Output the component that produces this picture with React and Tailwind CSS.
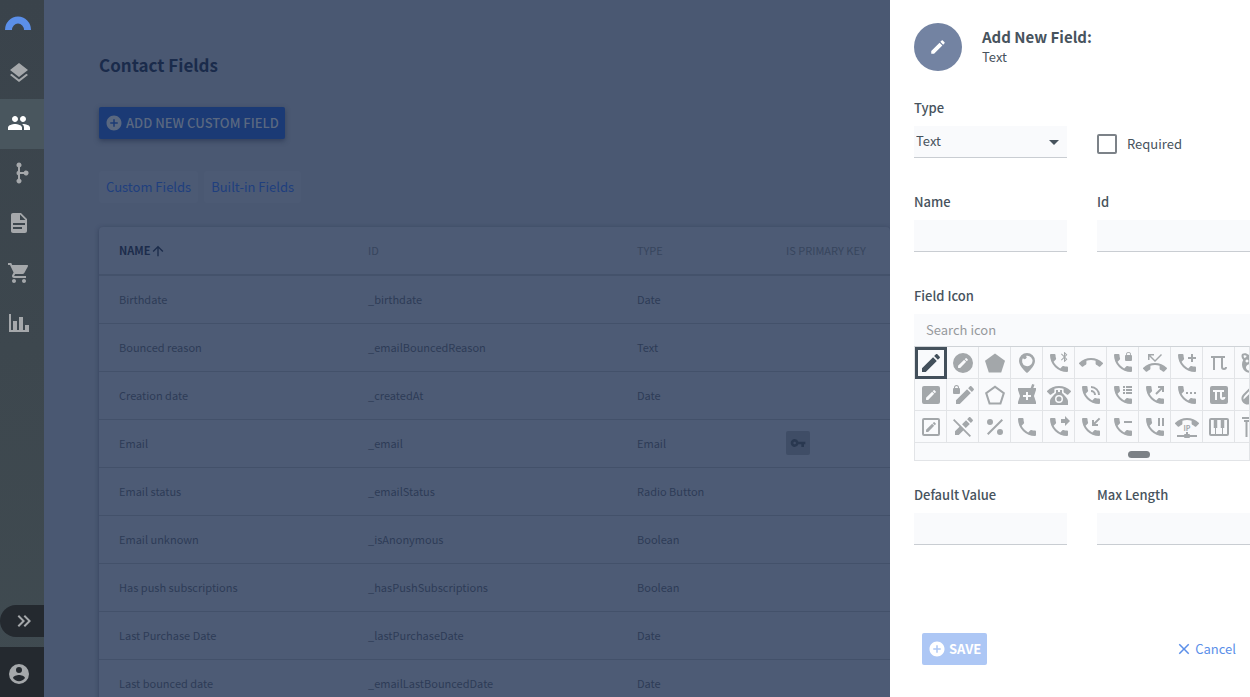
import React, { useState } from "react";
import {
  MdLayers,
  MdPeople,
  MdShoppingCart,
  MdAddCircle,
  MdArrowUpward,
  MdClose,
  MdVpnKey,
} from "react-icons/md";

const PHONE =
  "M6.62,10.79C8.06,13.62 10.38,15.94 13.21,17.38L15.41,15.18C15.69,14.9 16.08,14.82 16.43,14.93C17.55,15.3 18.75,15.5 20,15.5A1,1 0 0,1 21,16.5V20A1,1 0 0,1 20,21A17,17 0 0,1 3,4A1,1 0 0,1 4,3H7.5A1,1 0 0,1 8.5,4C8.5,5.25 8.7,6.45 9.07,7.57C9.18,7.92 9.1,8.31 8.82,8.59L6.62,10.79Z";
const PENCIL =
  "M20.71,7.04C21.1,6.65 21.1,6 20.71,5.63L18.37,3.29C18,2.9 17.35,2.9 16.96,3.29L15.12,5.12L18.87,8.87M3,17.25V21H6.75L17.81,9.93L14.06,6.18L3,17.25Z";
const SMALL_PENCIL =
  "M15.1,7.07C15.24,7.07 15.38,7.12 15.5,7.23L16.77,8.5C17,8.72 17,9.07 16.77,9.28L15.77,10.28L13.72,8.23L14.72,7.23C14.82,7.12 14.96,7.07 15.1,7.07M13.13,8.81L15.19,10.87L9.13,16.93H7.07V14.87L13.13,8.81Z";
const BOX = "M5,3H19A2,2 0 0,1 21,5V19A2,2 0 0,1 19,21H5A2,2 0 0,1 3,19V5A2,2 0 0,1 5,3Z";
const HANGUP =
  "M12,9C10.4,9 8.85,9.25 7.4,9.72V12.82C7.4,13.22 7.17,13.56 6.84,13.72C5.86,14.21 4.97,14.84 4.17,15.57C4,15.75 3.75,15.86 3.5,15.86C3.2,15.86 2.95,15.74 2.77,15.56L0.29,13.08C0.11,12.9 0,12.65 0,12.38C0,12.1 0.11,11.85 0.29,11.67C3.34,8.77 7.46,7 12,7C16.54,7 20.66,8.77 23.71,11.67C23.89,11.85 24,12.1 24,12.38C24,12.65 23.89,12.9 23.71,13.08L21.23,15.56C21.05,15.74 20.8,15.86 20.5,15.86C20.25,15.86 20,15.75 19.82,15.57C19.03,14.84 18.14,14.21 17.16,13.72C16.83,13.56 16.6,13.22 16.6,12.82V9.72C15.15,9.25 13.6,9 12,9Z";

// listed column by column, three to a column
const fieldIcons = [
  { key: "pencil", d: PENCIL },
  { key: "pencil-box", d: BOX + SMALL_PENCIL },
  { key: "pencil-box-outline", d: BOX + "M5,5V19H19V5H5Z" + SMALL_PENCIL },
  { key: "pencil-circle", d: "M12,2A10,10 0 1,0 22,12A10,10 0 0,0 12,2Z" + SMALL_PENCIL },
  {
    key: "pencil-lock",
    d: "M5.5,2A2.5,2.5 0 0,0 3,4.5V5A1,1 0 0,0 2,6V10A1,1 0 0,0 3,11H8A1,1 0 0,0 9,10V6A1,1 0 0,0 8,5V4.5A2.5,2.5 0 0,0 5.5,2M5.5,3A1.5,1.5 0 0,1 7,4.5V5H4V4.5A1.5,1.5 0 0,1 5.5,3M19.66,3C19.4,3 19.16,3.09 18.97,3.28L17.13,5.13L20.88,8.88L22.72,7.03C23.11,6.64 23.11,6 22.72,5.63L20.38,3.28C20.18,3.09 19.91,3 19.66,3M16.06,6.19L5,17.25V21H8.75L19.81,9.94L16.06,6.19Z",
  },
  {
    key: "pencil-off",
    d: "M18.66,2C18.4,2 18.16,2.09 17.97,2.28L16.13,4.13L19.88,7.88L21.72,6.03C22.11,5.64 22.11,5 21.72,4.63L19.38,2.28C19.18,2.09 18.91,2 18.66,2M3.28,4L2,5.28L8.5,11.75L4,16.25V20H7.75L12.25,15.5L18.72,22L20,20.72L13.5,14.25L9.75,10.5L3.28,4M15.06,5.19L11.03,9.22L14.78,12.97L18.81,8.94L15.06,5.19Z",
  },
  { key: "pentagon", d: "M12,2.5L2,9.8L5.8,21.5H18.2L22,9.8L12,2.5Z" },
  { key: "pentagon-outline", d: "M12,2.5L2,9.8L5.8,21.5H18.2L22,9.8L12,2.5ZM12,5L19.6,10.5L16.7,19.5H7.3L4.4,10.5L12,5Z" },
  {
    key: "percent",
    d: "M7,4A3,3 0 0,1 10,7A3,3 0 0,1 7,10A3,3 0 0,1 4,7A3,3 0 0,1 7,4M17,14A3,3 0 0,1 20,17A3,3 0 0,1 17,20A3,3 0 0,1 14,17A3,3 0 0,1 17,14M20,5.41L5.41,20L4,18.59L18.59,4L20,5.41Z",
  },
  {
    key: "periscope",
    d: "M12,2A8,8 0 0,0 4,10C4,15.5 12,22 12,22S20,15.5 20,10A8,8 0 0,0 12,2ZM12,4.8C11.7,4.8 11.4,4.8 11.1,4.9A1.9,1.9 0 1,1 8,7A5.2,5.2 0 1,0 12,4.8Z",
  },
  {
    key: "pharmacy",
    d: "M21,5H18.35L19.5,1.85L17.15,1L15.69,5H3V7L5,13L3,19V21H21V19L19,13L21,7V5M16,14H13V17H11V14H8V12H11V9H13V12H16V14Z",
  },
  { key: "phone", d: PHONE },
  {
    key: "phone-bluetooth",
    d: PHONE + "M18,7.21L18.94,8.14L18,9.08M18,2.91L18.94,3.85L18,4.79M14.71,9.5L17,7.21V11H17.5L20.35,8.14L18.21,6L20.35,3.85L17.5,1H17V4.79L14.71,2.5L14,3.21L16.79,6L14,8.79L14.71,9.5Z",
  },
  {
    key: "phone-classic",
    d: "M12,3C7.46,3 3.34,4.78 0.29,7.67C0.11,7.85 0,8.1 0,8.38C0,8.66 0.11,8.91 0.29,9.09L2.77,11.57C2.95,11.75 3.2,11.86 3.5,11.86C3.75,11.86 4,11.75 4.18,11.58C4.97,10.84 5.87,10.22 6.84,9.73C7.17,9.57 7.4,9.23 7.4,8.83V5.73C8.85,5.25 10.39,5 12,5C13.59,5 15.14,5.25 16.59,5.72V8.82C16.59,9.21 16.82,9.56 17.15,9.72C18.13,10.21 19,10.84 19.82,11.57C20,11.75 20.25,11.85 20.5,11.85C20.8,11.85 21.05,11.74 21.23,11.56L23.71,9.08C23.89,8.9 24,8.65 24,8.37C24,8.09 23.88,7.85 23.7,7.67C20.65,4.78 16.53,3 12,3M9,7V10C9,10 3,15 3,18V22H21V18C21,15 15,10 15,10V7H13V9H11V7H9M12,12A4,4 0 0,1 16,16A4,4 0 0,1 12,20A4,4 0 0,1 8,16A4,4 0 0,1 12,12M12,13.5A2.5,2.5 0 0,0 9.5,16A2.5,2.5 0 0,0 12,18.5A2.5,2.5 0 0,0 14.5,16A2.5,2.5 0 0,0 12,13.5Z",
  },
  { key: "phone-forward", d: PHONE + "M18,11L23,6L18,1V4H14V8H18V11Z" },
  { key: "phone-hangup", d: HANGUP },
  {
    key: "phone-in-talk",
    d: PHONE + "M19,12H21A9,9 0 0,0 12,3V5C15.86,5 19,8.13 19,12M15,12H17A5,5 0 0,0 12,7V9A3,3 0 0,1 15,12Z",
  },
  { key: "phone-incoming", d: PHONE + "M19,11V9H16.41L21.3,4.1L19.9,2.7L15,7.59V5H13V11H19Z" },
  {
    key: "phone-lock",
    d: PHONE + "M20,4V3.5A2.5,2.5 0 0,0 17.5,1A2.5,2.5 0 0,0 15,3.5V4A1,1 0 0,0 14,5V9A1,1 0 0,0 15,10H20A1,1 0 0,0 21,9V5A1,1 0 0,0 20,4M19.2,4H15.8V3.5A1.7,1.7 0 0,1 17.5,1.8A1.7,1.7 0 0,1 19.2,3.5V4Z",
  },
  { key: "phone-log", d: PHONE + "M12,3H14V5H12ZM15,3H21V5H15ZM12,6H14V8H12ZM15,6H21V8H15ZM12,9H14V11H12ZM15,9H21V11H15Z" },
  { key: "phone-minus", d: PHONE + "M13,6V8H21V6Z" },
  {
    key: "phone-missed",
    d: "M6.5,5.5L12,11L19,4L18,3L12,9L7.5,4.5H11V3H5V9H6.5V5.5M23.71,16.67C20.66,13.78 16.54,12 12,12C7.46,12 3.34,13.78 0.29,16.67C0.11,16.85 0,17.1 0,17.38C0,17.65 0.11,17.9 0.29,18.08L2.77,20.56C2.95,20.74 3.2,20.86 3.5,20.86C3.75,20.86 4,20.75 4.18,20.58C4.97,19.84 5.87,19.22 6.84,18.73C7.17,18.57 7.4,18.23 7.4,17.83V14.73C8.85,14.25 10.39,14 12,14C13.6,14 15.15,14.25 16.6,14.72V17.82C16.6,18.22 16.83,18.56 17.16,18.72C18.13,19.21 19.03,19.83 19.82,20.57C20,20.75 20.25,20.85 20.5,20.85C20.8,20.85 21.05,20.74 21.23,20.56L23.71,18.08C23.89,17.9 24,17.65 24,17.37C24,17.09 23.88,16.85 23.71,16.67Z",
  },
  { key: "phone-outgoing", d: PHONE + "M15,3V5H17.59L12.3,10.3L13.7,11.7L19,6.41V9H21V3H15Z" },
  { key: "phone-pause", d: PHONE + "M19,11H21V3H19ZM15,11H17V3H15Z" },
  { key: "phone-plus", d: PHONE + "M18,3V6H21V8H18V11H16V8H13V6H16V3H18Z" },
  { key: "phone-settings", d: PHONE + "M19,11H21V9H19ZM15,9V11H17V9ZM13,9H11V11H13Z" },
  { key: "phone-voip", d: "M13,17V19H14A1,1 0 0,1 15,20H22V22H15A1,1 0 0,1 14,23H10A1,1 0 0,1 9,22H2V20H9A1,1 0 0,1 10,19H11V17H13Z" },
  { key: "pi", d: "M4,5V7H6V19H8V7H14V16A3,3 0 0,0 17,19A3,3 0 0,0 20,16H18A1,1 0 0,1 17,17A1,1 0 0,1 16,16V7H18V5Z" },
  { key: "pi-box", d: BOX + "M6,7V9H8V17H10V9H13V14A3,3 0 0,0 16,17A3,3 0 0,0 18.5,14H16.5A1,1 0 0,1 15,14V9H17V7H6Z" },
  {
    key: "piano",
    d: "M4,3H20A2,2 0 0,1 22,5V19A2,2 0 0,1 20,21H4A2,2 0 0,1 2,19V5A2,2 0 0,1 4,3M4,5V19H8V13H6.75V5H4M9,19H15V13H13.75V5H10.25V13H9V19M16,19H20V5H17.25V13H16V19Z",
  },
  {
    key: "pig",
    d: "M3,3C5,1.6 8,2 9.5,3.8H14.5C16,2 19,1.6 21,3C22,5 21.4,7.5 19.8,9C21,11 21.4,13.5 20.5,16.5C19,20.5 15.5,22 12,22S5,20.5 3.5,16.5C2.6,13.5 3,11 4.2,9C2.6,7.5 2,5 3,3ZM4.6,4.4C4.5,5.6 5,6.6 5.8,7.2L7.8,4.9C6.8,4.2 5.6,4 4.6,4.4ZM8,8.5A1.5,1.5 0 1,0 8.01,8.5ZM12,13C9,13 7,14.5 7,16.5S9,20 12,20S17,18.5 17,16.5S15,13 12,13Z",
  },
  {
    key: "pill",
    d: "M4.22,11.29L11.29,4.22C13.64,1.88 17.43,1.88 19.78,4.22C22.12,6.56 22.12,10.36 19.78,12.71L12.71,19.78C10.36,22.12 6.56,22.12 4.22,19.78C1.88,17.43 1.88,13.64 4.22,11.29M5.64,12.71C4.59,13.75 4.24,15.24 4.6,16.57L10.59,10.59L14.83,14.83L18.36,11.29C19.93,9.73 19.93,7.2 18.36,5.64C16.8,4.07 14.27,4.07 12.71,5.64L5.64,12.71Z",
  },
  { key: "pillar", d: "M3,2H21V4H3ZM5,5H19V7H17.5V22H15.5V7H13V22H11V7H8.5V22H6.5V7H5Z" },
];

const sidebarPaths = {
  branch:
    "M12,1.5A2.5,2.5 0 0,1 13,6.3V11H16.8A2.5,2.5 0 1,1 16.8,13H13V17.7A2.5,2.5 0 1,1 11,17.7V14.3A2.5,2.5 0 0,1 11,9.7V6.3A2.5,2.5 0 0,1 12,1.5Z",
  file: "M13,9H18.5L13,3.5V9M6,2H14L20,8V20A2,2 0 0,1 18,22H6C4.89,22 4,21.1 4,20V4C4,2.89 4.89,2 6,2M15,18V16H6V18H15M18,14V12H6V14H18Z",
  chart: "M22,21H2V3H4V19H6V10H10V19H12V6H16V19H18V14H22V21Z",
  expand: "M5.59,7.41L7,6L13,12L7,18L5.59,16.59L10.17,12L5.59,7.41M11.59,7.41L13,6L19,12L13,18L11.59,16.59L16.17,12L11.59,7.41Z",
  account:
    "M12,19.2C9.5,19.2 7.29,17.92 6,16C6.03,14 10,12.9 12,12.9C14,12.9 17.97,14 18,16C16.71,17.92 14.5,19.2 12,19.2M12,5A3,3 0 0,1 15,8A3,3 0 0,1 12,11A3,3 0 0,1 9,8A3,3 0 0,1 12,5M12,2A10,10 0 1,0 22,12A10,10 0 0,0 12,2Z",
};

const rows = [
  { name: "Birthdate", id: "_birthdate", type: "Date" },
  { name: "Bounced reason", id: "_emailBouncedReason", type: "Text" },
  { name: "Creation date", id: "_createdAt", type: "Date" },
  { name: "Email", id: "_email", type: "Email", primary: true },
  { name: "Email status", id: "_emailStatus", type: "Radio Button" },
  { name: "Email unknown", id: "_isAnonymous", type: "Boolean" },
  { name: "Has push subscriptions", id: "_hasPushSubscriptions", type: "Boolean" },
  { name: "Last Purchase Date", id: "_lastPurchaseDate", type: "Date" },
  { name: "Last bounced date", id: "_emailLastBouncedDate", type: "Date" },
];

function Icon({ d, className = "h-6 w-6", children }) {
  return (
    <svg viewBox="0 0 24 24" fill="currentColor" fillRule="evenodd" className={`shrink-0 ${className}`}>
      <path d={d} />
      {children}
    </svg>
  );
}

const navItems = [
  { key: "content", icon: <MdLayers className="h-6 w-6" /> },
  { key: "contacts", icon: <MdPeople className="h-6 w-6" />, active: true },
  { key: "automation", icon: <Icon d={sidebarPaths.branch} /> },
  { key: "pages", icon: <Icon d={sidebarPaths.file} /> },
  { key: "store", icon: <MdShoppingCart className="h-6 w-6" /> },
  { key: "reports", icon: <Icon d={sidebarPaths.chart} /> },
];

function Sidebar() {
  return (
    <aside className="flex w-11 shrink-0 flex-col bg-linear-to-b from-[#3a434b] to-[#404b51] text-[#a5a8ab]">
      <a href="#home" aria-label="Home" className="flex h-[49px] shrink-0 items-center pb-1 pl-[5px] text-[#5b8fe9]">
        <svg viewBox="0 0 26 14" fill="currentColor" className="h-[14px] w-[26px]">
          <path d="M0 14A13 13.5 0 0 1 26 14H19A6 6.5 0 0 0 7 14Z" />
        </svg>
      </a>
      <nav className="flex-1">
        {navItems.map((item) => (
          <a
            key={item.key}
            href={`#${item.key}`}
            aria-label={item.key}
            className={`flex h-[50px] items-center pb-0.5 pl-[7px] ${item.active ? "bg-[#49565e] text-white" : ""}`}
          >
            {item.icon}
          </a>
        ))}
      </nav>
      <button aria-label="Expand" className="mb-[10px] flex h-8 items-center rounded-l-full bg-[#24292f] pl-3">
        <Icon d={sidebarPaths.expand} />
      </button>
      <button aria-label="Account" className="flex h-[50px] items-center bg-[#24292f] pt-1 pl-[7px]">
        <Icon d={sidebarPaths.account} />
      </button>
    </aside>
  );
}

function FieldsTable() {
  return (
    <table className="w-full table-fixed rounded bg-[#4d5b75] text-left text-[11px] shadow-[0_1px_4px_rgba(30,42,70,0.5)]">
      <colgroup>
        <col className="w-[269px]" />
        <col className="w-[269px]" />
        <col className="w-[149px]" />
        <col />
      </colgroup>
      <thead>
        <tr className="h-12 border-b-2 border-[#44526b] text-[#37455d]">
          <th className="pl-5 font-bold text-[#1c2c4b]">
            <button className="flex items-center">
              NAME <MdArrowUpward className="h-4 w-4" />
            </button>
          </th>
          <th className="font-normal">ID</th>
          <th className="font-normal">TYPE</th>
          <th className="font-normal">IS PRIMARY KEY</th>
        </tr>
      </thead>
      <tbody className="text-[#2d3c57]">
        {rows.map((row) => (
          <tr key={row.id} className="h-12 border-b border-[#43516a]">
            <td className="pl-5">{row.name}</td>
            <td>{row.id}</td>
            <td>{row.type}</td>
            <td>
              {row.primary && (
                <span className="flex h-6 w-6 items-center justify-center rounded-xs bg-[#3f4d66] text-[#293850]">
                  <MdVpnKey className="h-4 w-4" />
                </span>
              )}
            </td>
          </tr>
        ))}
      </tbody>
    </table>
  );
}

function ContactFields() {
  return (
    <main className="min-w-0 flex-1 overflow-hidden bg-[#4a5872] pt-[51px] pl-[55px]">
      <h1 className="text-[17px] leading-7 font-bold text-[#1a2b4b]">Contact Fields</h1>
      <button className="mt-7 flex h-8 items-center gap-[3px] rounded-xs bg-[#1b3a75] px-1.5 text-[13px] font-medium text-[#5a6880] shadow-[0_2px_5px_rgba(25,38,66,0.5)]">
        <MdAddCircle className="h-[18px] w-[18px]" />
        ADD NEW CUSTOM FIELD
      </button>
      <div className="mt-8 mb-6 flex gap-1.5 text-[13px] text-[#1f3f7e]">
        <button className="h-8 rounded-xs bg-[#4c5a74] px-[7px]">Custom Fields</button>
        <button className="h-8 rounded-xs bg-[#4c5a74] px-[7px]">Built-in Fields</button>
      </div>
      <FieldsTable />
    </main>
  );
}

function Field({ id, label, children }) {
  return (
    <div className="min-w-0 flex-1">
      <label htmlFor={id} className="mb-2 block text-[13px] leading-5 font-medium">
        {label}
      </label>
      {children || <input id={id} className="block h-8 w-full border-b border-[#c9cdd2] bg-[#f9fafc] px-3 outline-none" />}
    </div>
  );
}

function IconPicker({ selected, onSelect }) {
  return (
    <div className="overflow-hidden border border-[#e2e4e7] border-t-[#cfd3d7] bg-[#f9fafc]">
      <div className="grid grid-flow-col grid-rows-3 justify-start">
        {fieldIcons.map((icon) => (
          <button
            key={icon.key}
            type="button"
            aria-label={icon.key}
            onClick={() => onSelect(icon.key)}
            className={`flex h-8 w-8 items-center justify-center ${
              selected === icon.key ? "border-3 border-[#43505b] text-[#43505b]" : "border-r border-b border-[#e2e4e7] text-[#a3a7aa]"
            }`}
          >
            <Icon d={icon.d}>
              {icon.key === "phone-voip" && (
                <>
                  <path d={HANGUP} transform="translate(0 -4)" />
                  <text x="12" y="16" textAnchor="middle" fontSize="7" fontWeight="bold">
                    IP
                  </text>
                </>
              )}
            </Icon>
          </button>
        ))}
      </div>
      <div className="flex h-[17px] items-center pt-1.5 pl-[213px]">
        <div className="h-[7px] w-[22px] rounded-full bg-[#7c8186]" />
      </div>
    </div>
  );
}

function AddFieldDrawer() {
  const [icon, setIcon] = useState("pencil");
  const current = fieldIcons.find((item) => item.key === icon);

  return (
    <section className="flex w-[360px] shrink-0 flex-col bg-white pt-[23px] pl-6 text-[13px] text-[#47535d]">
      <header className="mb-[27px] flex items-center gap-5">
        <div className="flex h-12 w-12 items-center justify-center rounded-full bg-[#7383a2] text-white">
          <Icon d={current.d} className="h-[18px] w-[18px]" />
        </div>
        <div className="leading-5">
          <h2 className="text-[15px] font-bold">Add New Field:</h2>
          <p>Text</p>
        </div>
      </header>
      <form className="flex flex-1 flex-col">
        <div className="mb-[34px] flex gap-[30px]">
          <Field id="type" label="Type">
            <div className="relative">
              <select id="type" className="block h-8 w-full appearance-none border-b border-[#c9cdd2] bg-[#f9fafc] pb-0.5 pl-0.5 outline-none">
                <option>Text</option>
                <option>Date</option>
                <option>Email</option>
              </select>
              <svg viewBox="0 0 10 5" fill="currentColor" className="pointer-events-none absolute top-[14px] right-2 h-[5px] w-[10px]">
                <path d="M0 0H10L5 5Z" />
              </svg>
            </div>
          </Field>
          <label className="flex flex-1 items-center gap-[10px] pt-8">
            <input type="checkbox" className="h-5 w-5 appearance-none rounded-xs border-2 border-[#7c8288]" />
            Required
          </label>
        </div>
        <div className="mb-[34px] flex gap-[30px]">
          <Field id="name" label="Name" />
          <Field id="field-id" label="Id" />
        </div>
        <div className="mb-6">
          <Field id="icon-search" label="Field Icon">
            <input id="icon-search" placeholder="Search icon" className="block h-8 w-full bg-[#f9fafc] px-3 pb-0.5 outline-none placeholder:text-[#96999d]" />
          </Field>
          <IconPicker selected={icon} onSelect={setIcon} />
        </div>
        <div className="flex gap-[30px]">
          <Field id="default-value" label="Default Value" />
          <Field id="max-length" label="Max Length" />
        </div>
        <footer className="mt-auto flex items-center justify-between pr-[14px] pb-8 pl-2">
          <button type="button" className="flex h-8 items-center gap-[3px] rounded-xs bg-[#adc7f5] px-1.5 font-bold text-white">
            <MdAddCircle className="h-[18px] w-[18px]" />
            SAVE
          </button>
          <button type="button" className="flex items-center gap-0.5 text-[#5b8fe9]">
            <MdClose className="h-[18px] w-[18px]" />
            Cancel
          </button>
        </footer>
      </form>
    </section>
  );
}

export default function App() {
  return (
    <div className="flex h-screen overflow-hidden font-['Noto_Sans_CJK_SC',sans-serif]">
      <Sidebar />
      <ContactFields />
      <AddFieldDrawer />
    </div>
  );
}
